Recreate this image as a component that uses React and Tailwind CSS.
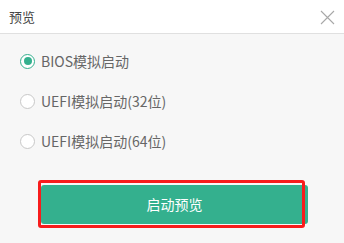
import React from 'react'

const font = { fontFamily: '"Microsoft YaHei", "Noto Sans CJK SC", "Liberation Sans", sans-serif' }

function Radio({ checked, label }) {
  return (
    <label className="flex items-center h-10 cursor-pointer">
      <span
        className={
          'w-[15px] h-[15px] rounded-full border flex items-center justify-center bg-white ' +
          (checked ? 'border-[#34b08e]' : 'border-[#c8c8c8]')
        }
      >
        {checked && <span className="w-[8px] h-[8px] rounded-full bg-[#34b08e]" />}
      </span>
      <span className="ml-[6px] text-[14px] text-[#666666] leading-none">{label}</span>
    </label>
  )
}

export default function App() {
  return (
    <div className="w-[344px] h-[243px] bg-[#f7f7f7] overflow-hidden" style={font}>
      <div className="h-[34px] bg-white border-b border-[#e0e0e0] flex items-center justify-between pl-[9px] pr-[9px]">
        <span className="text-[13px] text-[#444444]">预览</span>
        <svg width="15" height="15" viewBox="0 0 15 15" className="mt-[1px]">
          <path d="M1 1L14 14M14 1L1 14" stroke="#a8a8a8" strokeWidth="1.1" fill="none" />
        </svg>
      </div>
      <div className="pl-[20px] pt-[7px] flex flex-col">
        <Radio checked label="BIOS模拟启动" />
        <Radio label="UEFI模拟启动(32位)" />
        <Radio label="UEFI模拟启动(64位)" />
      </div>
      <div className="ml-[41px] mt-[24px] relative w-[267px]">
        <button className="w-[267px] h-[39px] rounded-[3px] bg-[#34b08e] text-white text-[14px] flex items-center justify-center">
          启动预览
        </button>
        <div className="absolute left-[-3px] top-[-5px] w-[267px] h-[48px] border-[3px] border-[#f81c1c] rounded-[3px] pointer-events-none" />
      </div>
    </div>
  )
}
